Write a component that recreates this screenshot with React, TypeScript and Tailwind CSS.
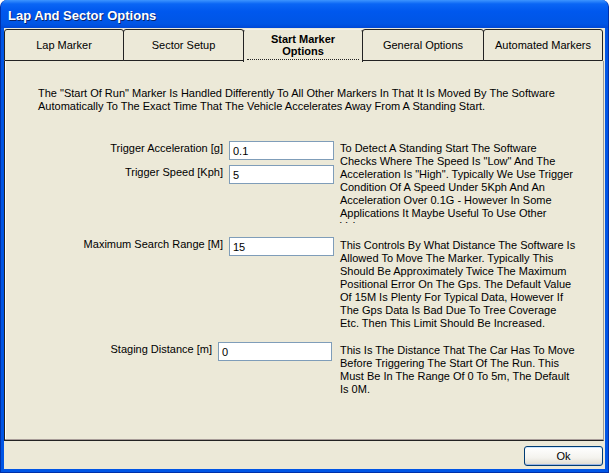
import React from "react";

const tabs = [
  { label: "Lap Marker", w: "w-[120px]" },
  { label: "Sector Setup", w: "w-[121px]" },
  { label: "Start Marker Options", w: "w-[120px]", active: true },
  { label: "General Options", w: "w-[122px]" },
  { label: "Automated Markers", w: "w-[120px]" },
];

const speedHelp = [
  "To Detect A Standing Start The Software",
  'Checks Where The Speed Is "Low" And The',
  'Acceleration Is "High". Typically We Use Trigger',
  "Condition Of A Speed Under 5Kph And An",
  "Acceleration Over 0.1G - However In Some",
  "Applications It Maybe Useful To Use Other",
  "Values.",
];

const rangeHelp = [
  "This Controls By What Distance The Software Is",
  "Allowed To Move The Marker. Typically This",
  "Should Be Approximately Twice The Maximum",
  "Positional Error On The Gps. The Default Value",
  "Of 15M Is Plenty For Typical Data, However If",
  "The Gps Data Is Bad Due To Tree Coverage",
  "Etc. Then This Limit Should Be Increased.",
];

const stagingHelp = [
  "This Is The Distance That The Car Has To Move",
  "Before Triggering The Start Of The Run. This",
  "Must Be In The Range Of 0 To 5m, The Default",
  "Is 0M.",
];

function Help({ lines, className = "" }: { lines: string[]; className?: string }) {
  return (
    <div className={`leading-[13px] ${className}`}>
      {lines.map((l) => (
        <div key={l} className="whitespace-nowrap">
          {l}
        </div>
      ))}
    </div>
  );
}

function Field({ label, value, labelW = "w-[216px]", inputW = "w-[105px]" }: { label: string; value: string; labelW?: string; inputW?: string }) {
  return (
    <div className="flex items-center gap-[6px] h-[19px]">
      <div className={`${labelW} text-right whitespace-nowrap -mt-[4px]`}>{label}</div>
      <div className={`${inputW} h-[19px] bg-white border border-[#7F9DB9] pl-[3px] pt-[2px] leading-[15px]`}>
        {value}
      </div>
    </div>
  );
}

export default function App() {
  return (
    <div className="w-[609px] h-[473px] flex flex-col bg-[#0055E5] border-x border-b border-[#0030a8] rounded-t-[7px] overflow-hidden text-[11px] text-black font-['Liberation_Sans',Arial,sans-serif]">
      {/* Title bar */}
      <div className="h-[28px] shrink-0 flex items-center pl-[7px] pt-[4px] bg-[linear-gradient(180deg,#3d95ff_0%,#0a66f5_14%,#0058ee_40%,#0055e5_85%,#0048d6_100%)]">
        <span className="text-white font-bold text-[13px] [text-shadow:1px_1px_0_#0a246a]">
          Lap And Sector Options
        </span>
      </div>

      {/* Client */}
      <div className="flex-1 mx-[3px] mb-[3px] bg-[#ECE9D8] flex flex-col">
        {/* Tabs */}
        <div className="flex h-[33px] shrink-0 pt-[1px] pr-[2px]">
          {tabs.map((t, i) => (
            <div
              key={t.label}
              className={`${t.w} ${i > 0 ? "-ml-px" : ""} rounded-t-[3px] border-x border-t flex items-center justify-center text-center ${
                t.active
                  ? "border-x-[#222] border-t-[#f4f2ea] font-bold leading-[12px] relative z-10 h-[33px]"
                  : "border-[#222] border-b h-[32px]"
              }`}
            >
              {t.active ? (
                <div className="w-full">
                  <div>Start Marker</div>
                  <div className="mx-[3px] pb-[2px] border-b border-dotted border-[#222]">Options</div>
                </div>
              ) : (
                <span>{t.label}</span>
              )}
            </div>
          ))}
        </div>

        {/* Panel */}
        <div className="h-[380px] shrink-0 mr-[1px] border-l border-l-[#222] border-r border-r-[#9a9a9a] border-b border-b-[#222] shadow-[inset_0_-1px_0_#a89c98,inset_1px_0_0_#fff] pt-[26px] pl-[2px]">
          <div className="pl-[31px] leading-[13px]">
            <div>The "Start Of Run" Marker Is Handled Differently To All Other Markers In That It Is Moved By The Software</div>
            <div>Automatically To The Exact Time That The Vehicle Accelerates Away From A Standing Start.</div>
          </div>

          <div className="flex mt-[28px] h-[82px] overflow-hidden">
            <div className="flex flex-col gap-[5px]">
              <Field label="Trigger Acceleration [g]" value="0.1" />
              <Field label="Trigger Speed [Kph]" value="5" />
            </div>
            <Help lines={speedHelp} className="ml-[6px] pt-[1px]" />
          </div>

          <div className="flex mt-[14px]">
            <Field label="Maximum Search Range [M]" value="15" />
            <Help lines={rangeHelp} className="ml-[6px] pt-[2px]" />
          </div>

          <div className="flex mt-[12px]">
            <Field label="Staging Distance [m]" value="0" labelW="w-[205px]" inputW="w-[114px]" />
            <Help lines={stagingHelp} className="ml-[8px] pt-[2px]" />
          </div>
        </div>

        {/* Bottom bar */}
        <div className="flex-1 flex justify-end items-start pt-[5px] pr-[2px]">
          <button className="w-[79px] h-[20px] rounded-[3px] border border-[#003C74] bg-[linear-gradient(180deg,#ffffff_0%,#f4f3ee_60%,#dedbd0_100%)] shadow-[inset_0_1px_0_#cee7ff,inset_0_-1px_0_#9db7e5] text-[11px] leading-[16px]">
            Ok
          </button>
        </div>
      </div>
    </div>
  );
}
